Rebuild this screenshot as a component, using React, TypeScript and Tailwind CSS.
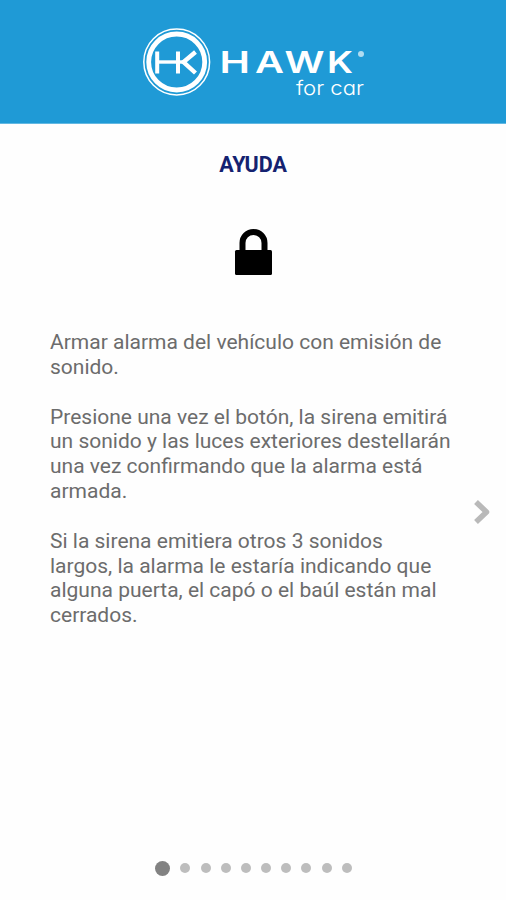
import clsx from "clsx";

const paragraphs = [
  ["Armar alarma del vehículo con emisión de", "sonido."],
  [
    "Presione una vez el botón, la sirena emitirá",
    "un sonido y las luces exteriores destellarán",
    "una vez confirmando que la alarma está",
    "armada.",
  ],
  [
    "Si la sirena emitiera otros 3 sonidos",
    "largos, la alarma le estaría indicando que",
    "alguna puerta, el capó o el baúl están mal",
    "cerrados.",
  ],
];

const PAGE_COUNT = 10;

function HawkLogo() {
  return (
    <svg width="224" height="76" viewBox="142 24 224 76" fill="none" stroke="#fff" className="ml-[2px]">
      <circle cx="176.7" cy="62" r="32.9" strokeWidth="1.5" />
      <circle cx="176.7" cy="62" r="28" strokeWidth="4.8" />
      <path d="M157.2 51.5v22M178 51.5v22" strokeWidth="4" />
      <path d="M157.2 62H184" strokeWidth="3.4" />
      <path d="M195.5 52 183.5 62 195.5 73" strokeWidth="4.4" />
      <g fill="#fff" stroke="none" className="font-['Inter',sans-serif]">
        <text y="73" fontSize="30" fontWeight="600">
          <tspan x="219.5" textLength="30.5" lengthAdjust="spacingAndGlyphs">H</tspan>
          <tspan x="255" textLength="29" lengthAdjust="spacingAndGlyphs">A</tspan>
          <tspan x="284.5" textLength="40" lengthAdjust="spacingAndGlyphs">W</tspan>
          <tspan x="327" textLength="26" lengthAdjust="spacingAndGlyphs">K</tspan>
        </text>
        <text
          x="296"
          y="95"
          fontSize="20"
          fontWeight="300"
          textLength="68"
          lengthAdjust="spacingAndGlyphs"
          className="[font-feature-settings:'cv11']"
        >
          for car
        </text>
      </g>
      <circle cx="361" cy="54" r="3" fill="#fff" fillOpacity="0.65" stroke="none" />
    </svg>
  );
}

function PageDots({ active }: { active: number }) {
  return (
    <div className="ml-px flex h-4 items-center gap-[10.2px]">
      {Array.from({ length: PAGE_COUNT }, (_, i) => (
        <span
          key={i}
          className={clsx(
            "shrink-0 rounded-full",
            i === active ? "size-[15px] bg-[#828282]" : "size-[10px] bg-[#bdbdbd]"
          )}
        />
      ))}
    </div>
  );
}

export default function App() {
  return (
    <div className="flex h-[900px] w-[506px] flex-col bg-[#fefefe] font-['Roboto',sans-serif]">
      <header className="flex h-[124px] shrink-0 justify-center border-b border-[#62b8e2] bg-[#1f9ad6] pt-6">
        <HawkLogo />
      </header>

      <main className="flex flex-1 flex-col">
        <h1 className="mt-[27px] text-center text-[21.5px] leading-7 font-bold text-[#152270]">
          AYUDA
        </h1>
        <div className="mt-[50px] flex h-[46px] justify-center">
          <svg width="38" height="46" viewBox="0 0 38 46">
            <rect x="1" y="21" width="37" height="25" rx="1.5" fill="#000" />
            <path
              d="M8.5 22V14a11 11 0 0 1 22 0v8"
              fill="none"
              stroke="#000"
              strokeWidth="6"
            />
          </svg>
        </div>

        <div className="mt-[55px] flex h-[300px]">
          <div className="ml-[50px] w-[410px] text-[21px] leading-[24.85px] text-[#6c6c6c]">
            {paragraphs.map((lines) => (
              <p key={lines[0]} className="mb-[24.85px]">
                {lines.map((line) => (
                  <span key={line} className="block whitespace-nowrap">
                    {line}
                  </span>
                ))}
              </p>
            ))}
          </div>
          <button type="button" aria-label="Siguiente" className="mt-[169px] ml-[13px] h-[26px]">
            <svg width="18" height="26" viewBox="0 0 18 26" fill="none">
              <path
                d="M3 3 13.5 13 3 23"
                stroke="#b9b9b9"
                strokeWidth="5.5"
                strokeLinejoin="round"
              />
            </svg>
          </button>
        </div>

        <div className="mt-auto mb-6 flex justify-center">
          <PageDots active={0} />
        </div>
      </main>
    </div>
  );
}
